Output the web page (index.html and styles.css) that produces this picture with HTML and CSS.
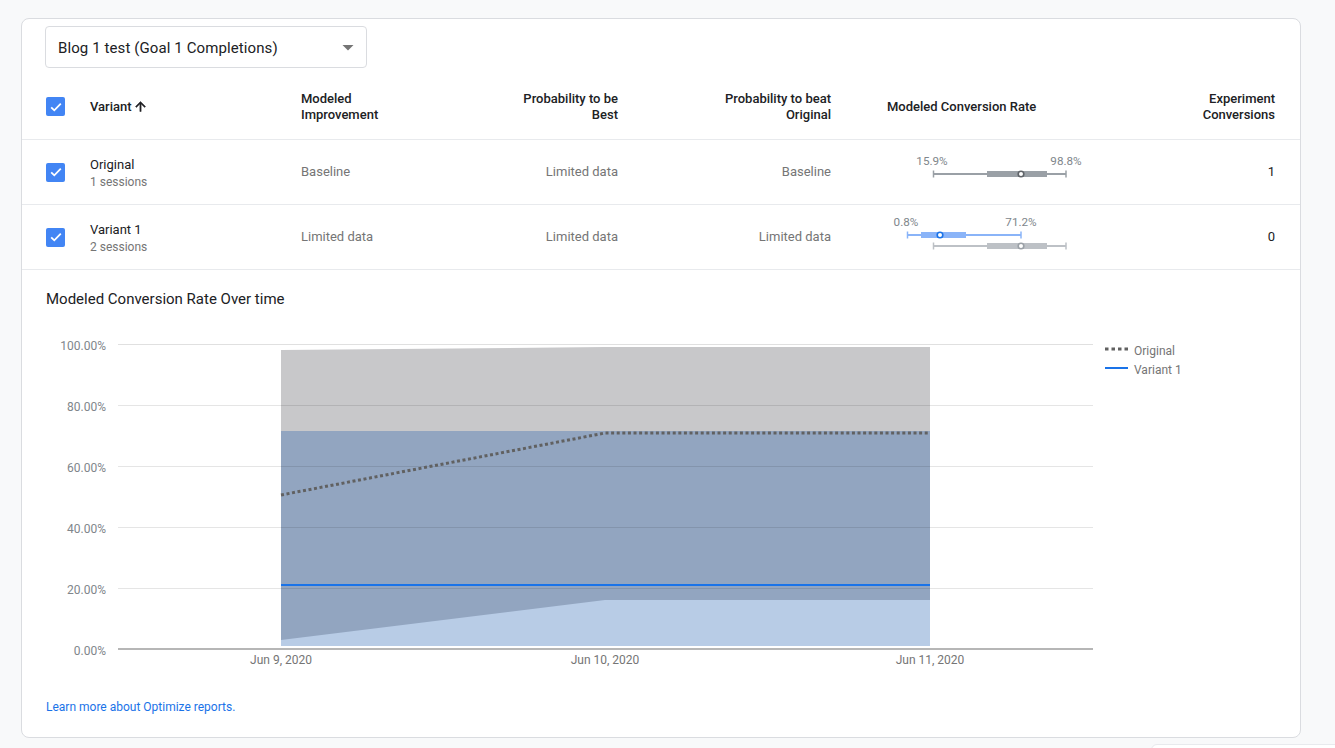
FILE: index.html
```html
<!DOCTYPE html>
<html lang="en">
<head>
<meta charset="utf-8">
<title>Optimize report</title>
<link rel="stylesheet" href="styles.css">
</head>
<body>
<div class="card">
  <div class="select-wrap">
    <div class="select">
      <span class="select-text">Blog 1 test (Goal 1 Completions)</span>
      <svg class="select-arrow" width="12" height="6" viewBox="0 0 12 6"><path d="M0.5 0h11L6 5.5z" fill="#757575"/></svg>
    </div>
  </div>

  <div class="table">
    <div class="trow thead">
      <div class="cell cb-cell"><span class="cb"><svg width="18" height="18" viewBox="0 0 18 18"><path d="M4.2 9.3l3.1 3 6.5-6.6" fill="none" stroke="#fff" stroke-width="1.8"/></svg></span></div>
      <div class="cell th">Variant <svg class="sort" width="15" height="15" viewBox="0 0 24 24"><path d="M4 12l1.41 1.41L11 7.830V20h2V7.83l5.58 5.59L20 12l-8-8-8 8z" fill="#202124" stroke="#202124" stroke-width="0.8"/></svg></div>
      <div class="cell th">Modeled<br>Improvement</div>
      <div class="cell th right">Probability to be<br>Best</div>
      <div class="cell th right">Probability to beat<br>Original</div>
      <div class="cell th mcr">Modeled Conversion Rate</div>
      <div class="cell th right">Experiment<br>Conversions</div>
    </div>

    <div class="trow">
      <div class="cell cb-cell"><span class="cb"><svg width="18" height="18" viewBox="0 0 18 18"><path d="M4.2 9.3l3.1 3 6.5-6.6" fill="none" stroke="#fff" stroke-width="1.8"/></svg></span></div>
      <div class="cell name"><div class="vname">Original</div><div class="sessions">1 sessions</div></div>
      <div class="cell td">Baseline</div>
      <div class="cell td right">Limited data</div>
      <div class="cell td right">Baseline</div>
      <div class="cell plot">
        <svg width="230" height="64" viewBox="0 0 230 64">
          <text x="45" y="21" class="pl">15.9%</text>
          <text x="179" y="21" class="pl">98.8%</text>
          <line x1="46" y1="34" x2="179" y2="34" stroke="#9aa0a6" stroke-width="2"/>
          <line x1="46.5" y1="30.5" x2="46.5" y2="37.5" stroke="#9aa0a6" stroke-width="1.5"/>
          <line x1="179" y1="30.5" x2="179" y2="37.5" stroke="#9aa0a6" stroke-width="1.5"/>
          <rect x="100" y="31" width="60" height="6" fill="#9aa0a6"/>
          <circle cx="134" cy="34" r="2.8" fill="#fff" stroke="#5f6368" stroke-width="1.6"/>
        </svg>
      </div>
      <div class="cell td num">1</div>
    </div>

    <div class="trow">
      <div class="cell cb-cell"><span class="cb"><svg width="18" height="18" viewBox="0 0 18 18"><path d="M4.2 9.3l3.1 3 6.5-6.6" fill="none" stroke="#fff" stroke-width="1.8"/></svg></span></div>
      <div class="cell name"><div class="vname">Variant 1</div><div class="sessions">2 sessions</div></div>
      <div class="cell td">Limited data</div>
      <div class="cell td right">Limited data</div>
      <div class="cell td right">Limited data</div>
      <div class="cell plot">
        <svg width="230" height="64" viewBox="0 0 230 64">
          <text x="19" y="17" class="pl">0.8%</text>
          <text x="134" y="17" class="pl">71.2%</text>
          <line x1="20" y1="30" x2="134" y2="30" stroke="#8ab4f8" stroke-width="2"/>
          <line x1="20.5" y1="26.5" x2="20.5" y2="33.5" stroke="#8ab4f8" stroke-width="1.5"/>
          <line x1="134" y1="26.5" x2="134" y2="33.5" stroke="#8ab4f8" stroke-width="1.5"/>
          <rect x="34" y="27" width="45" height="6" fill="#8ab4f8"/>
          <circle cx="53" cy="30" r="2.8" fill="#fff" stroke="#1a73e8" stroke-width="1.6"/>
          <line x1="46" y1="41" x2="179" y2="41" stroke="#bdc1c6" stroke-width="2"/>
          <line x1="46.5" y1="37.5" x2="46.5" y2="44.5" stroke="#bdc1c6" stroke-width="1.5"/>
          <line x1="179" y1="37.5" x2="179" y2="44.5" stroke="#bdc1c6" stroke-width="1.5"/>
          <rect x="100" y="38" width="60" height="6" fill="#bdc1c6"/>
          <circle cx="134" cy="41" r="2.8" fill="#fff" stroke="#9aa0a6" stroke-width="1.6"/>
        </svg>
      </div>
      <div class="cell td num">0</div>
    </div>
  </div>

  <div class="chart-section">
    <div class="chart-title">Modeled Conversion Rate Over time</div>
    <svg class="chart" width="1277" height="360" viewBox="0 0 1277 360">
      <!-- page x = svg x + 22, page y = svg y + 320 -->
      <g class="ylab">
        <text x="84" y="27">100.00%</text>
        <text x="84" y="88">80.00%</text>
        <text x="84" y="149">60.00%</text>
        <text x="84" y="210">40.00%</text>
        <text x="84" y="271">20.00%</text>
        <text x="84" y="332">0.00%</text>
      </g>
      <g stroke="#e0e0e0" stroke-width="1">
        <line x1="96" y1="25.5" x2="1071" y2="25.5"/>
      </g>
      <!-- original band (gray) -->
      <polygon points="259,31 583,28 908,28 908,281 583,281 259,321" fill="#c8c8ca"/>
      <!-- variant band (light blue) -->
      <rect x="259" y="112" width="649" height="215" fill="#b8cce6"/>
      <!-- overlap -->
      <polygon points="259,112 908,112 908,281 583,281 259,321" fill="#92a5c0"/>
      <g stroke="rgba(0,0,0,0.1)" stroke-width="1">
        <line x1="96" y1="86.5" x2="1071" y2="86.5"/>
        <line x1="96" y1="147.5" x2="1071" y2="147.5"/>
        <line x1="96" y1="208.5" x2="1071" y2="208.5"/>
        <line x1="96" y1="269.5" x2="1071" y2="269.5"/>
      </g>
      <line x1="96" y1="330" x2="1071" y2="330" stroke="#9e9e9e" stroke-width="1.3"/>
      <!-- variant line -->
      <line x1="259" y1="266" x2="908" y2="266" stroke="#1a73e8" stroke-width="2"/>
      <!-- original dotted line -->
      <polyline points="259,176 583,114 908,114" fill="none" stroke="#616161" stroke-width="3" stroke-dasharray="3 2.6"/>
      <g class="xlab">
        <text x="259" y="341">Jun 9, 2020</text>
        <text x="583" y="341">Jun 10, 2020</text>
        <text x="908" y="341">Jun 11, 2020</text>
      </g>
      <!-- legend -->
      <line x1="1083" y1="30" x2="1106" y2="30" stroke="#616161" stroke-width="3" stroke-dasharray="3.5 3"/>
      <text x="1112" y="32" class="leg">Original</text>
      <line x1="1083" y1="49" x2="1106" y2="49" stroke="#1a73e8" stroke-width="2"/>
      <text x="1112" y="51" class="leg">Variant 1</text>
    </svg>
    <a class="learn" href="#">Learn more about Optimize reports.</a>
  </div>
</div>
<div class="floating-panel"></div>
</body>
</html>
```

FILE: styles.css
```css
* { box-sizing: border-box; }

html, body {
  margin: 0;
  padding: 0;
  background: #f8f9fa;
  font-family: Roboto, "Liberation Sans", Arial, sans-serif;
  color: #202124;
}

body {
  position: relative;
  width: 1335px;
  height: 748px;
  overflow: hidden;
  padding-top: 18px;
}

.card {
  margin-left: 21px;
  width: 1280px;
  height: 720px;
  background: #fff;
  border: 1px solid #dadce0;
  border-radius: 8px;
  padding-top: 7px;
}

.select-wrap {
  padding-left: 23px;
}

.select {
  width: 322px;
  height: 42px;
  border: 1px solid #dadce0;
  border-radius: 4px;
  display: flex;
  align-items: center;
  justify-content: space-between;
  padding: 0 12px 0 12px;
}

.select-text {
  font-size: 15px;
  line-height: 20px;
  padding-top: 2px;
  color: #202124;
  letter-spacing: 0.1px;
}

.select-arrow {
  display: block;
  margin-top: 1px;
}

.table {
  margin-top: 7px;
}

.trow {
  display: grid;
  grid-template-columns: 44px 211px 157px 160px 213px 284px 160px;
  padding: 0 24px 0 24px;
  height: 65px;
  border-bottom: 1px solid #e8eaed;
  align-items: center;
}

.thead {
  height: 65px;
  padding-bottom: 1px;
}

.cell {
  font-size: 13px;
  line-height: 16px;
}

.cb-cell {
  display: flex;
  align-items: center;
}

.cb {
  display: block;
  width: 19px;
  height: 19px;
  border-radius: 2px;
  background: #4285f4;
}

.cb svg {
  display: block;
  margin: 0.5px;
}

.th {
  font-weight: 500;
  color: #202124;
}

.th .sort {
  vertical-align: -3px;
  margin-left: -2px;
}

.right {
  text-align: right;
}

.mcr {
  padding-left: 56px;
}

.td {
  color: #757575;
}

.num {
  text-align: right;
  color: #202124;
}

.name {
  padding-top: 1px;
}

.vname {
  color: #202124;
  font-size: 13px;
  line-height: 18px;
}

.sessions {
  color: #757575;
  font-size: 12px;
  line-height: 16px;
}

.plot {
  align-self: stretch;
  padding-left: 56px;
}

.plot svg {
  display: block;
}

.pl {
  font-family: Roboto, "Liberation Sans", Arial, sans-serif;
  font-size: 11.7px;
  fill: #80868b;
  text-anchor: middle;
  dominant-baseline: central;
}

.chart-section {
  padding-top: 19px;
}

.chart-title {
  padding-left: 24px;
  font-size: 15px;
  line-height: 20px;
  color: #202124;
}

.chart {
  display: block;
  margin-top: 10px;
}

.ylab text {
  font-family: Roboto, "Liberation Sans", Arial, sans-serif;
  font-size: 12px;
  fill: #80868b;
  text-anchor: end;
  dominant-baseline: central;
}

.xlab text {
  font-family: Roboto, "Liberation Sans", Arial, sans-serif;
  font-size: 12px;
  fill: #757575;
  text-anchor: middle;
  dominant-baseline: central;
}

.leg {
  font-family: Roboto, "Liberation Sans", Arial, sans-serif;
  font-size: 12px;
  fill: #757575;
  dominant-baseline: central;
}

.learn {
  display: block;
  margin: 20px 0 0 24px;
  font-size: 12px;
  line-height: 16px;
  color: #1a73e8;
  text-decoration: none;
}

.floating-panel {
  position: absolute;
  left: 1151px;
  top: 744px;
  width: 200px;
  height: 20px;
  background: #fff;
  border: 1px solid #e8eaed;
  border-radius: 6px 0 0 0;
}
```
